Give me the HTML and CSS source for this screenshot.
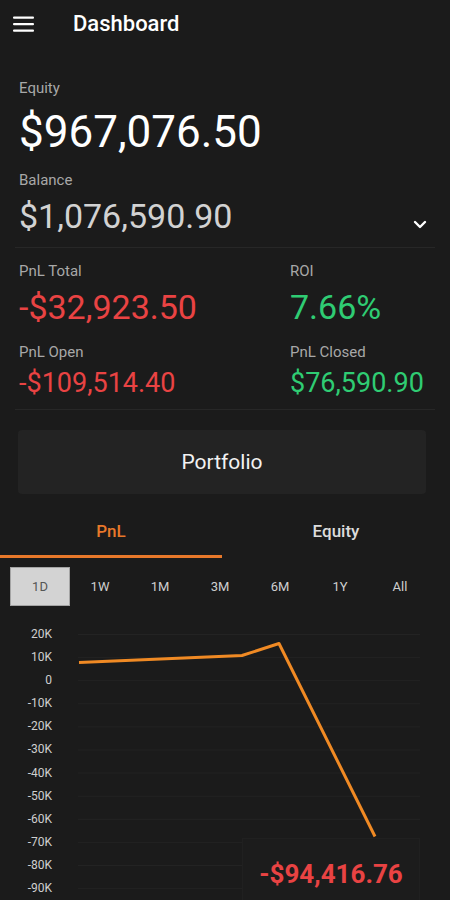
FILE: index.html
```html
<!DOCTYPE html>
<html lang="en">
  <head>
    <meta charset="utf-8" />
    <title>Dashboard</title>
    <link rel="stylesheet" href="styles.css">
  </head>

  <body>
    <header class="topbar">
      <button type="button" class="menu" aria-label="Menu">
        <svg width="22" height="16" viewBox="0 0 22 16" fill="#fff">
          <rect x="0" y="0.5" width="21" height="2.2" rx="1" />
          <rect x="0" y="7" width="21" height="2.2" rx="1" />
          <rect x="0" y="13.5" width="21" height="2.2" rx="1" />
        </svg>
      </button>
      <h1>Dashboard</h1>
    </header>

    <section class="summary">
      <p class="label">Equity</p>
      <p class="equity">$967,076.50</p>
      <p class="label balance-label">Balance</p>
      <div class="balance-row">
        <p class="balance">$1,076,590.90</p>
        <svg class="chevron" width="14" height="9" viewBox="0 0 14 9" fill="none" stroke="#fff" stroke-width="2.4" stroke-linecap="round" stroke-linejoin="round">
          <path d="M2 2l5 5 5-5" />
        </svg>
      </div>
    </section>

    <hr class="divider" />

    <section class="stats">
      <div class="stat">
        <p class="label">PnL Total</p>
        <p class="big loss">-$32,923.50</p>
      </div>
      <div class="stat">
        <p class="label">ROI</p>
        <p class="big gain">7.66%</p>
      </div>
      <div class="stat">
        <p class="label">PnL Open</p>
        <p class="mid loss">-$109,514.40</p>
      </div>
      <div class="stat">
        <p class="label">PnL Closed</p>
        <p class="mid gain">$76,590.90</p>
      </div>
    </section>

    <hr class="divider" />

    <button type="button" class="portfolio">Portfolio</button>

    <nav class="tabs">
      <button type="button" class="tab active">PnL</button>
      <button type="button" class="tab">Equity</button>
    </nav>

    <div class="ranges">
      <button type="button" class="range active">1D</button>
      <button type="button" class="range">1W</button>
      <button type="button" class="range">1M</button>
      <button type="button" class="range">3M</button>
      <button type="button" class="range">6M</button>
      <button type="button" class="range">1Y</button>
      <button type="button" class="range">All</button>
    </div>

    <div class="chart">
      <ul class="axis">
        <li>20K</li>
        <li>10K</li>
        <li>0</li>
        <li>-10K</li>
        <li>-20K</li>
        <li>-30K</li>
        <li>-40K</li>
        <li>-50K</li>
        <li>-60K</li>
        <li>-70K</li>
        <li>-80K</li>
        <li>-90K</li>
      </ul>
      <svg class="plot" width="398" height="280" viewBox="0 0 398 280">
        <g stroke="#232323" stroke-width="1">
          <path d="M26 11.5H368" />
          <path d="M26 34.6H368" />
          <path d="M26 57.7H368" />
          <path d="M26 80.8H368" />
          <path d="M26 103.9H368" />
          <path d="M26 127H368" />
          <path d="M26 150.1H368" />
          <path d="M26 173.2H368" />
          <path d="M26 196.3H368" />
          <path d="M26 219.4H368" />
          <path d="M26 242.5H368" />
          <path d="M26 265.6H368" />
        </g>
        <polyline points="27,39.5 190,32.5 227,20.5 323,213.5" fill="none" stroke="#f08a24" stroke-width="3" stroke-linejoin="round" />
      </svg>
      <div class="tooltip">-$94,416.76</div>
    </div>
  </body>
</html>
```

FILE: styles.css
```css
html,
body {
  margin: 0;
  height: 900px;
  overflow: hidden;
}

body {
  background-color: #1b1b1b;
  color: #fff;
  font-family: Roboto, "Noto Sans", sans-serif;
}

p {
  margin: 0;
}

button {
  font-family: inherit;
  border: 0;
  background: transparent;
  color: inherit;
  padding: 0;
  cursor: pointer;
}

.topbar {
  display: flex;
  align-items: center;
  gap: 38px;
  height: 48px;
  padding-inline: 13px;

  h1 {
    margin: 0;
    font-size: 22px;
    font-weight: 500;
    line-height: 1;
  }
}

.menu {
  display: flex;
}

.label {
  font-size: 15px;
  line-height: 20px;
  color: #a8a8a8;
}

.summary {
  padding: 30px 23px 11px 19px;
}

.equity {
  margin-top: 9px;
  font-size: 44px;
  line-height: 50px;
}

.balance-label {
  margin-top: 13px;
}

.balance-row {
  display: flex;
  justify-content: space-between;
  align-items: center;
  margin-top: 6px;
}

.balance {
  font-size: 34px;
  line-height: 40px;
  color: #d2d2d2;
}

.chevron {
  margin-top: 16px;
}

.divider {
  margin: 0 15px;
  border: 0;
  border-top: 1px solid #272727;
}

.stats {
  display: grid;
  grid-template-columns: 271px 1fr;
  row-gap: 15px;
  padding: 13px 19px 10px;

  .label + p {
    margin-top: 6px;
  }
}

.big {
  font-size: 34px;
  line-height: 40px;
}

.mid {
  font-size: 27px;
  line-height: 32px;
}

.stat:nth-child(n + 3) .label + p {
  margin-top: 5px;
}

.loss {
  color: #e94343;
}

.gain {
  color: #2fcc73;
}

.portfolio {
  display: block;
  margin: 20px 24px 0 18px;
  width: 408px;
  height: 64px;
  border-radius: 4px;
  background-color: #232323;
  font-size: 21px;
  color: #f2f2f2;
}

.tabs {
  display: grid;
  grid-template-columns: 222px 1fr;
  margin-top: 16px;
}

.tab {
  height: 48px;
  padding-bottom: 6px;
  font-size: 17px;
  font-weight: 500;
  color: #dcdcdc;

  &.active {
    color: #e8782a;
    border-bottom: 3px solid #e8782a;
    padding-bottom: 3px;
  }
}

.ranges {
  display: grid;
  grid-template-columns: repeat(7, 60px);
  margin: 9px 0 0 10px;
}

.range {
  height: 39px;
  font-size: 13px;
  color: #cfcfcf;

  &.active {
    background-color: #d3d3d3;
    border: 1px solid #a4a4a4;
    color: #555;
  }
}

.chart {
  position: relative;
  display: flex;
  margin-top: 17px;
}

.axis {
  list-style-type: "";
  margin: 0;
  padding: 0;
  width: 52px;
  text-align: right;
  font-size: 12px;
  line-height: 23.1px;
  color: #cfcfcf;
}

.tooltip {
  position: absolute;
  left: 242px;
  top: 215px;
  width: 178px;
  height: 70px;
  box-sizing: border-box;
  padding-top: 19px;
  border: 1px solid #202020;
  background-color: #1c1c1c;
  text-align: center;
  font-size: 26px;
  font-weight: 700;
  line-height: 32px;
  color: #e94343;
}
```
